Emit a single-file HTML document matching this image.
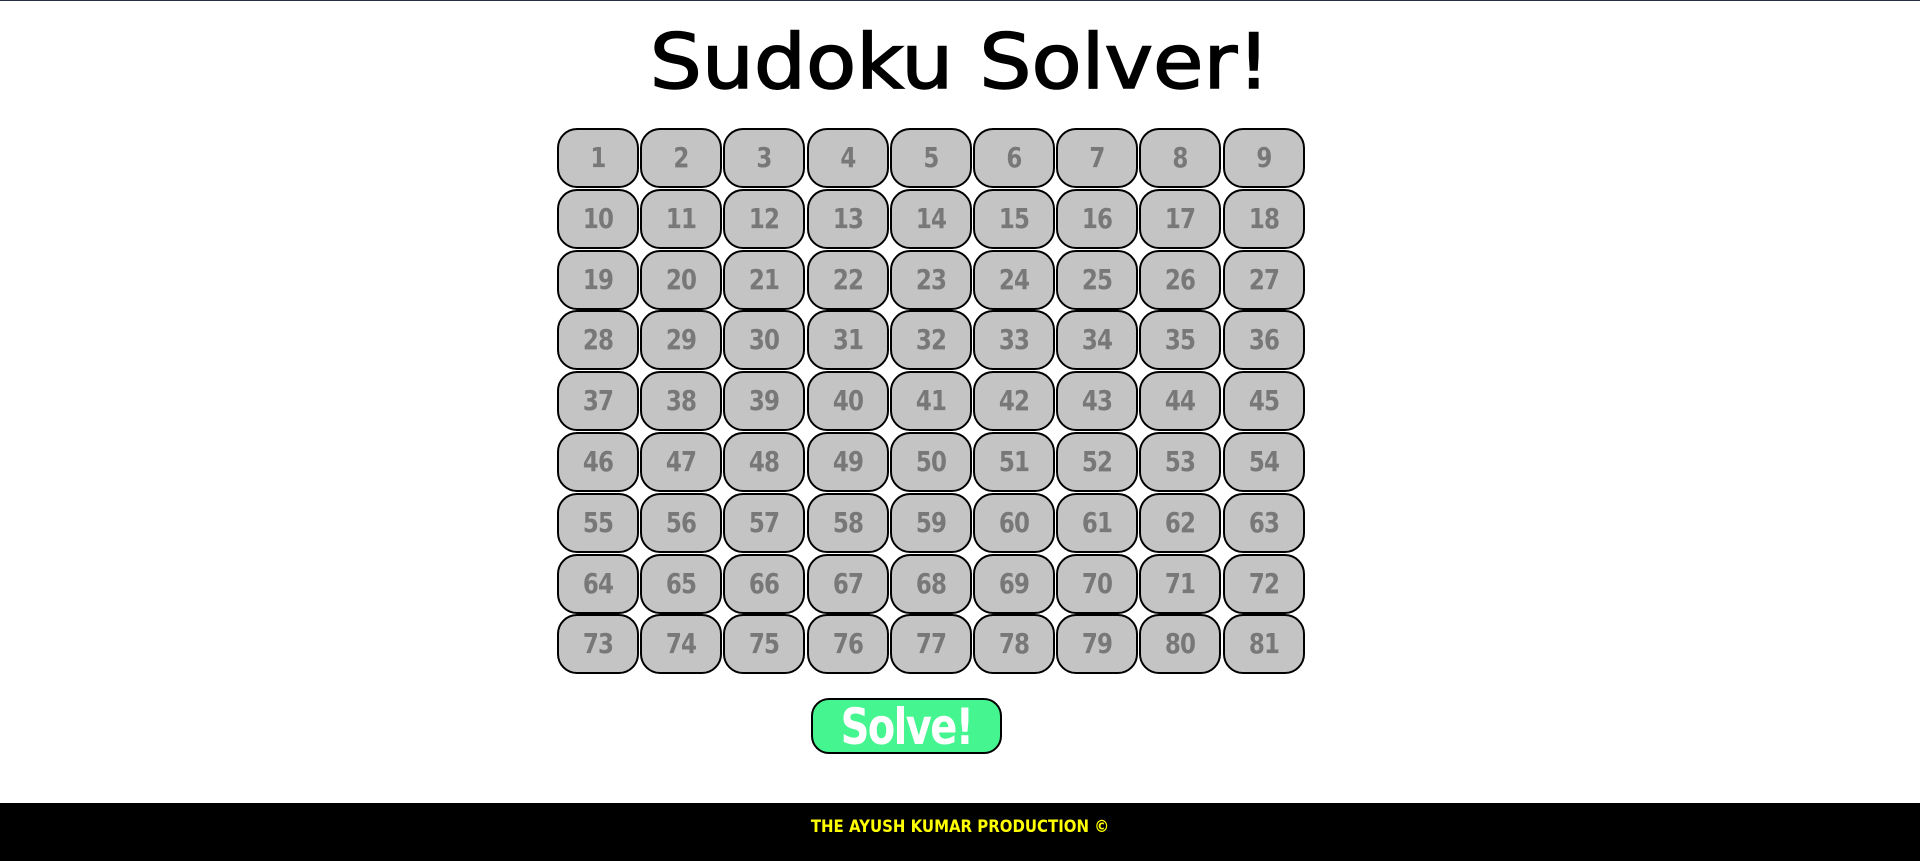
<!DOCTYPE html>
<html><head><meta charset="utf-8"><style>
html,body{margin:0;padding:0;width:1920px;height:861px;overflow:hidden;background:#fff;font-family:"DejaVu Sans","Liberation Sans",sans-serif;}
.top{position:absolute;left:0;top:0;width:1920px;height:1px;background:#2a2f45;}
h1{position:absolute;left:0;width:1920px;top:12px;margin:0;text-align:center;font-size:76px;font-weight:500;color:#000;letter-spacing:0px;line-height:100px;transform:scaleX(1.08);-webkit-text-stroke:1.5px #000;}
.grid{position:absolute;left:557px;top:128px;}
.c{position:absolute;width:78px;height:56px;border:2px solid #000;border-radius:20px;background:#c4c4c4;}
.c span{display:block;color:#787878;font-weight:bold;font-size:28px;text-align:center;line-height:56px;letter-spacing:-1px;transform:scaleX(0.82);}
.btn{position:absolute;left:811px;top:698px;width:187px;height:52px;border:2px solid #000;border-radius:18px;background:#45f58f;}
.btn span{display:block;color:#fff;font-weight:bold;font-size:50px;text-align:center;line-height:54px;letter-spacing:-2px;transform:scaleX(0.8);}
.foot{position:absolute;left:0;top:803px;width:1920px;height:58px;background:#000;}
.foot span{display:block;color:#ffff00;font-weight:bold;font-size:17px;text-align:center;line-height:48px;transform:scaleX(0.88);}
</style></head><body>
<div class="top"></div>
<h1>Sudoku Solver!</h1>
<div class="grid" id="g">
</div>
<div class="btn"><span>Solve!</span></div>
<div class="foot"><span>THE AYUSH KUMAR PRODUCTION ©</span></div>
<script>
var g=document.getElementById('g'),h='';
for(var r=0;r<9;r++)for(var c=0;c<9;c++){h+='<div class="c" style="left:'+(c*83.2)+'px;top:'+(r*60.8)+'px"><span>'+(r*9+c+1)+'</span></div>';}
g.innerHTML=h;
</script>
</body></html>
